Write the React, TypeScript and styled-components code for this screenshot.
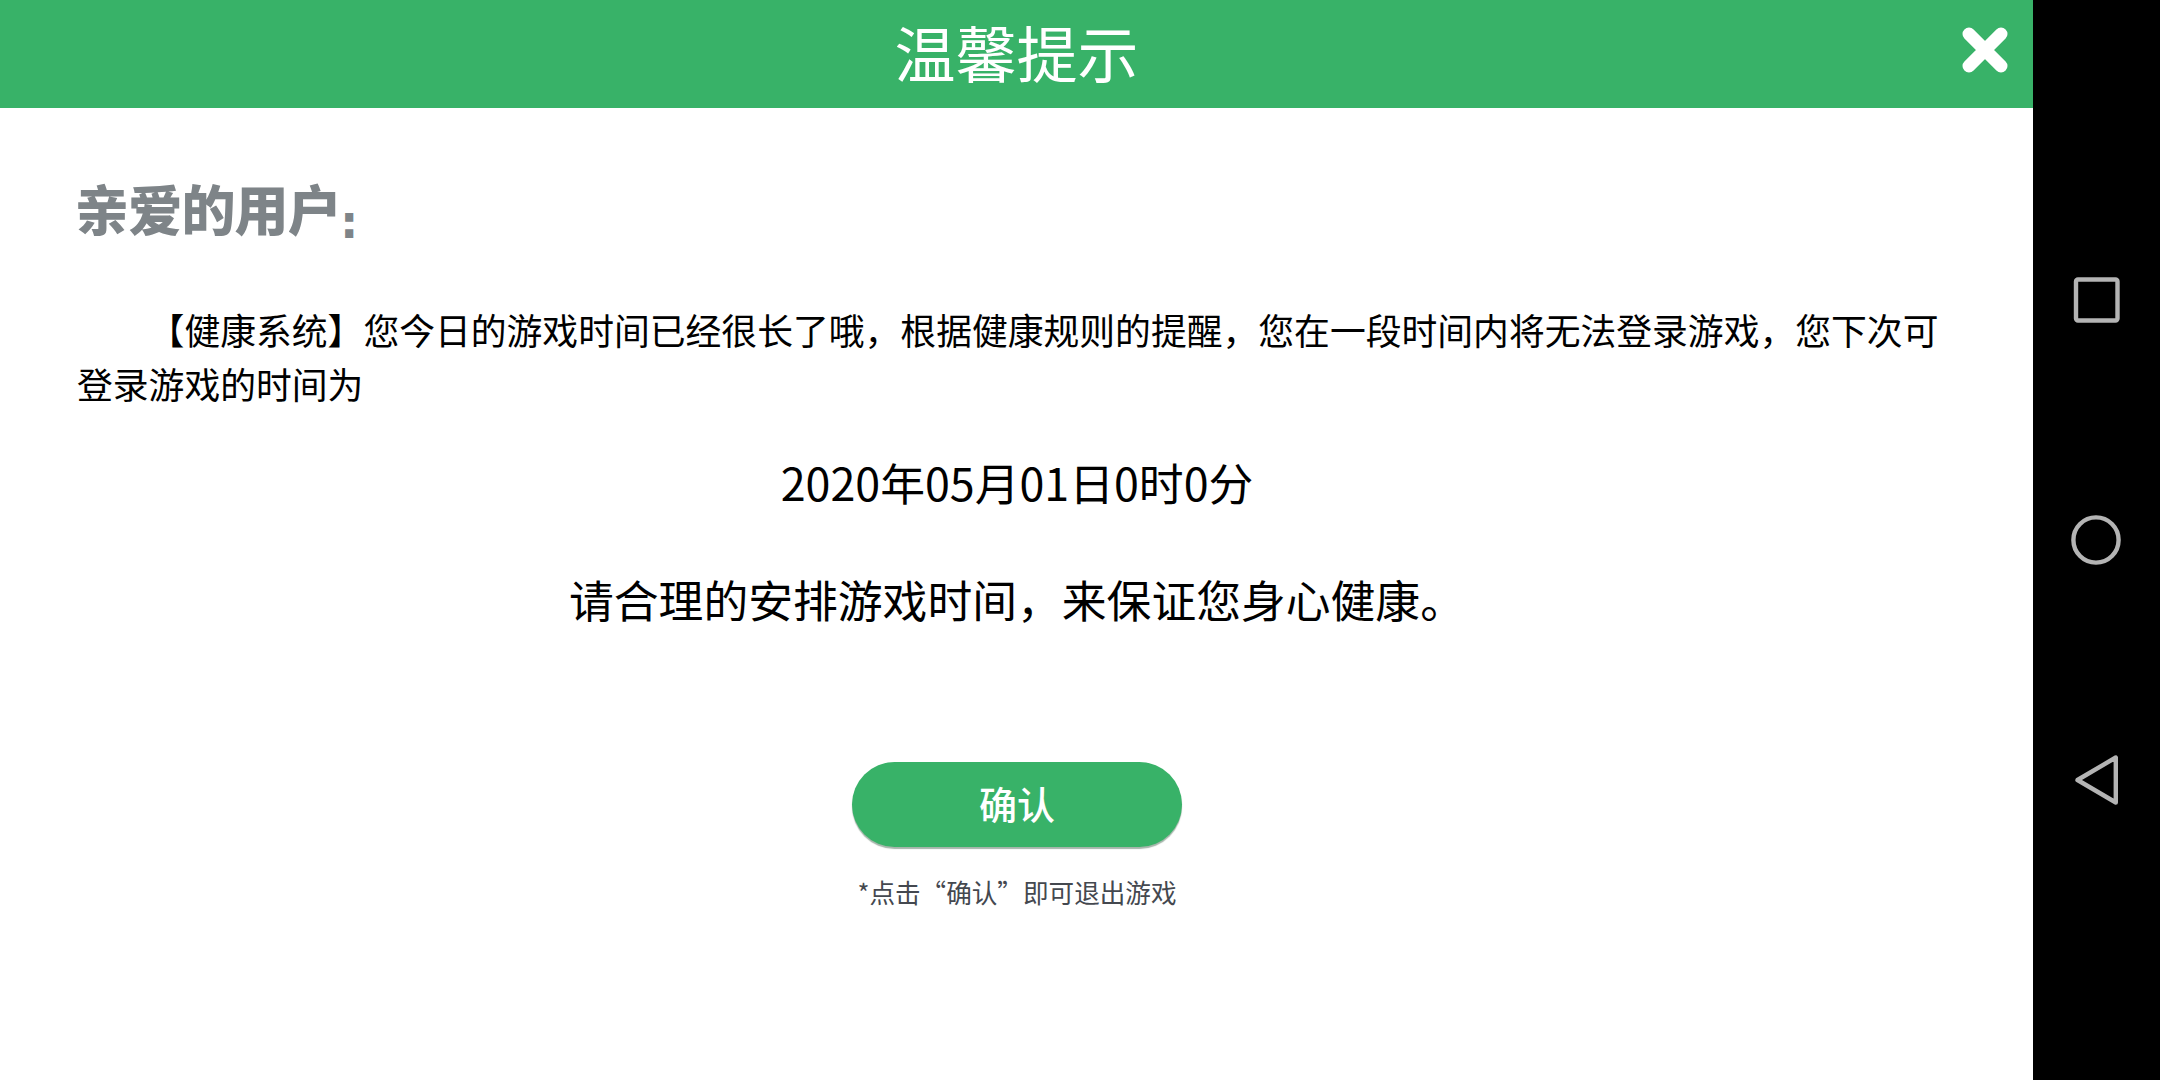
import styled, { createGlobalStyle } from "styled-components";

const GlobalStyle = createGlobalStyle`
* {
  box-sizing: border-box;
}
body {
  margin: 0;
  background-color: black;
  font-family: "Noto Sans CJK SC", sans-serif;
}
`;
const Screen = styled.div`
display: grid;
grid-template-columns: 2033px 127px;
height: 1080px;
overflow: hidden;
`;
const Notice = styled.div`
background-color: white;
display: flex;
flex-direction: column;
`;
const Header = styled.header`
display: grid;
grid-template-columns: 97px 1fr 97px;
align-items: center;
justify-items: center;
height: 108px;
background-color: #38b268;
`;
const Title = styled.h1`
grid-column: 2;
margin: 0;
padding-bottom: 4px;
color: white;
font-size: 61px;
font-weight: 400;
line-height: 104px;
`;
const Close = styled.button`
border: none;
padding: 0 0 9px;
background-color: transparent;
line-height: 0;
`;
const Content = styled.main`
display: flex;
flex-direction: column;
align-items: center;
padding: 61px 77px 0;
`;
const Greeting = styled.h2`
display: flex;
align-self: flex-start;
margin: 0 0 0 -2px;
height: 78px;
color: #7e8488;
font-size: 54px;
font-weight: 900;
line-height: 78px;
letter-spacing: -0.8px;
white-space: nowrap;
`;
const Colon = styled.span`
margin-left: -1px;
padding-top: 14px;
font-family: "DejaVu Sans", sans-serif;
font-size: 46px;
font-weight: 700;
`;
const Message = styled.p`
margin: 55px 0 0;
width: 100%;
font-size: 35.8px;
line-height: 54px;
text-indent: 2em;
`;
const Line = styled.p<{ top: number }>`
margin: ${(prop) => prop.top}px 0 0;
padding-left: 1px;
font-size: 44.8px;
line-height: 66px;
`;
const Confirm = styled.button`
margin-top: 130px;
width: 330px;
height: 85px;
border: none;
border-radius: 43px;
padding: 0 0 4px 1px;
background-color: #38b268;
box-shadow: 0 2px 1px #a5b5aa;
color: white;
font-family: inherit;
font-size: 38px;
font-weight: 500;
`;
const Hint = styled.small`
margin-top: 25px;
padding-left: 1px;
color: #44484f;
font-size: 25.6px;
line-height: 40px;
`;
const Nav = styled.nav`
display: flex;
flex-direction: column;
align-items: center;
justify-content: center;
gap: 180px;
padding-right: 1px;
`;

function App() {
  return (
    <Screen>
      <GlobalStyle />
      <Notice>
        <Header>
          <Title>温馨提示</Title>
          <Close aria-label="关闭">
            <svg width="48" height="48" viewBox="0 0 48 48" fill="none" stroke="white" strokeWidth="13" strokeLinecap="round">
              <path d="M8 8L40 40M40 8L8 40" />
            </svg>
          </Close>
        </Header>
        <Content>
          <Greeting>亲爱的用户<Colon>:</Colon></Greeting>
          <Message>【健康系统】您今日的游戏时间已经很长了哦，根据健康规则的提醒，您在一段时间内将无法登录游戏，您下次可登录游戏的时间为</Message>
          <Line top={39}>2020年05月01日0时0分</Line>
          <Line top={51}>请合理的安排游戏时间，来保证您身心健康。</Line>
          <Confirm>确认</Confirm>
          <Hint>*点击“确认”即可退出游戏</Hint>
        </Content>
      </Notice>
      <Nav>
        <svg width="60" height="60" fill="none" stroke="#b4b4b4" strokeWidth="4.4">
          <rect x="10" y="9.5" width="41.5" height="41" rx="2" />
        </svg>
        <svg width="60" height="60" fill="none" stroke="#b4b4b4" strokeWidth="4.4">
          <circle cx="30" cy="30" r="22.6" />
        </svg>
        <svg width="60" height="60" fill="none" stroke="#b4b4b4" strokeWidth="4.4" strokeLinejoin="round">
          <path d="M11.5 30L49.8 7.5V52.5Z" />
        </svg>
      </Nav>
    </Screen>
  );
}
export default App;
